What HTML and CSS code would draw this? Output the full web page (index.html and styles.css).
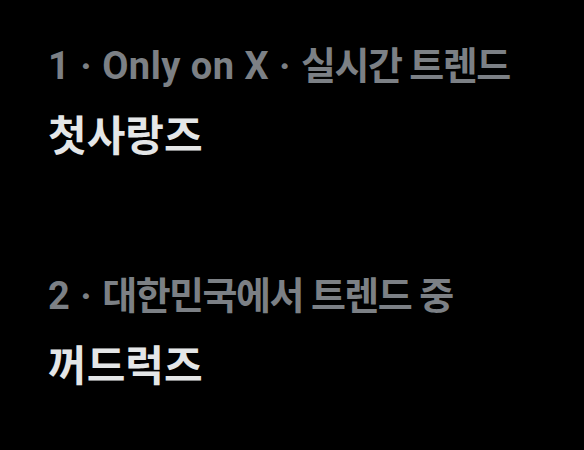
FILE: index.html
```html
<!DOCTYPE html>
<html lang="ko">
<head>
    <meta charset="UTF-8">
    <meta name="viewport" content="width=device-width, initial-scale=1.0">
    <title>트렌드</title>
    <link rel="stylesheet" href="styles.css">
</head>
<body>
    <div class="trend-list">
        <div class="trend">
            <div class="trend-meta">1 · Only on X · <span class="ko">실시간 트렌드</span></div>
            <div class="trend-name">첫사랑즈</div>
        </div>
        <div class="trend">
            <div class="trend-meta">2 · <span class="ko">대한민국에서 트렌드 중</span></div>
            <div class="trend-name">꺼드럭즈</div>
        </div>
    </div>
</body>
</html>
```

FILE: styles.css
```css
body {
    margin: 0;
    padding: 0;
    background: #000;
    font-family: Roboto, "Noto Sans CJK KR", sans-serif;
}

.trend-list {
    display: flex;
    flex-direction: column;
    gap: 111px;
    padding: 44px 0 0 48px;
}

.trend {
    display: flex;
    flex-direction: column;
    gap: 23px;
}

.trend-meta {
    color: #7c8085;
    font-size: 38px;
    font-weight: 700;
    line-height: 44px;
    letter-spacing: 0.5px;
}

/* 한글은 자간을 살짝 좁힘 */
.trend-meta .ko {
    letter-spacing: -1.5px;
}

.trend-name {
    color: #e4e6e7;
    font-size: 42px;
    font-weight: 700;
    line-height: 52px;
}
```
